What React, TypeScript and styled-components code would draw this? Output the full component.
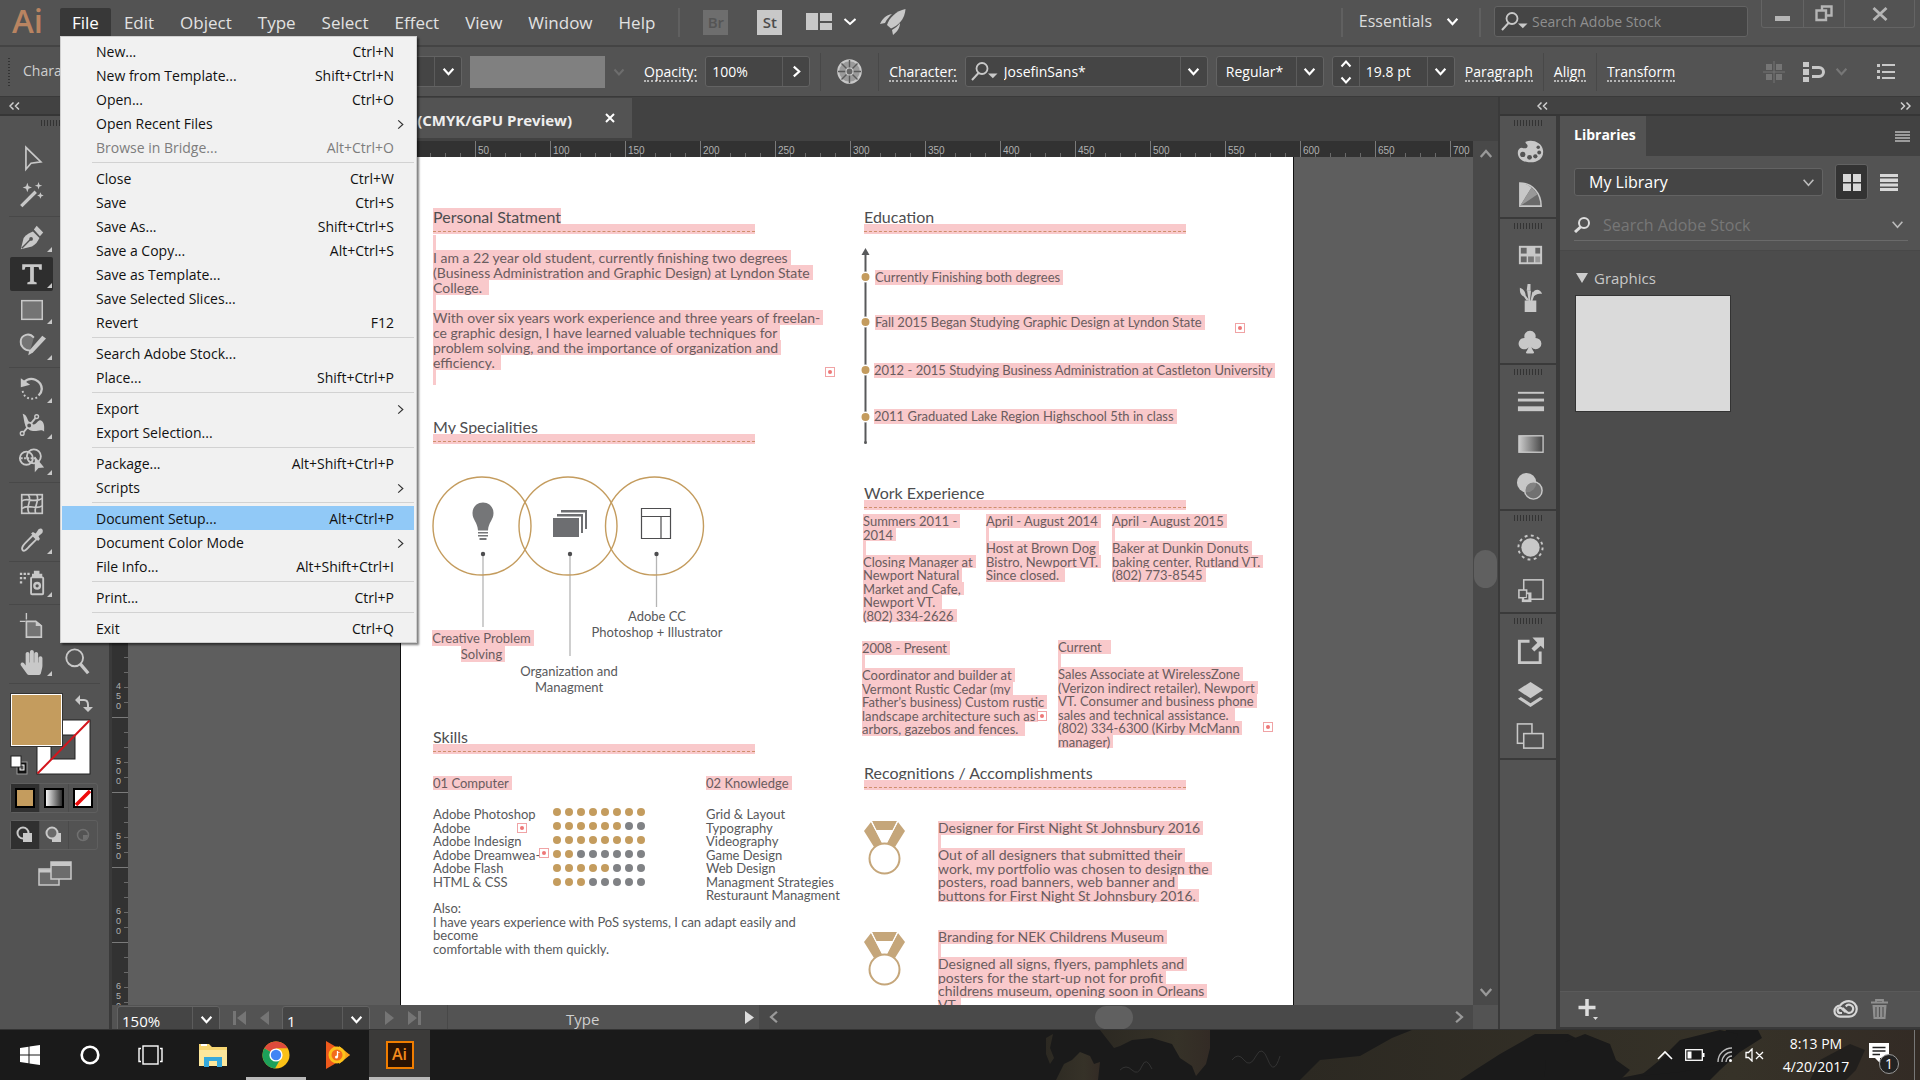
import React from 'react';
import styled, { createGlobalStyle, css } from 'styled-components';
import { BsSuitClubFill } from 'react-icons/bs';
import { FaHandPaper } from 'react-icons/fa';

const c = {
  panel: '#535353',
  field: '#454545',
  dark: '#424242',
  edge: '#3a3a3a',
  canvas: '#5e5e5e',
  icon: '#c8c8c8',
  gold: '#c49c5e',
  pink: '#f9c9cb',
};

const Global = createGlobalStyle`
  * { box-sizing: border-box; }
  html, body { margin: 0; background: ${c.panel}; }
  button, input, select { font: inherit; color: inherit; margin: 0; padding: 0; border: 0; background: none; border-radius: 0; outline: none; }
  svg { display: block; flex: none; }
`;

const Screen = styled.div`
  display: flex; flex-direction: column; height: 100vh; overflow: hidden;
  font-family: "Open Sans", "Noto Sans", sans-serif; font-size: 14px; color: #e6e6e6; background: ${c.panel};
`;

/* ---------- shared bits ---------- */
const Chevron = ({ dir = 'down', w = 12, color = '#fff', sw = 2 }: { dir?: 'down' | 'up' | 'left' | 'right'; w?: number; color?: string; sw?: number }) => {
  const rot = { down: 0, up: 180, left: 90, right: -90 }[dir];
  return (
    <svg width={w} height={w} viewBox="0 0 12 12" aria-hidden="true">
      <path d="M1.5 3.5L6 8.5L10.5 3.5" transform={`rotate(${rot} 6 6)`} fill="none" stroke={color} strokeWidth={sw} />
    </svg>
  );
};

const SearchGlyph = () => (
  <svg width="27" height="20" viewBox="0 0 27 20" aria-hidden="true">
    <circle cx="11" cy="6.500" r="5.500" fill="none" stroke="#c8c8c8" strokeWidth="1.800" />
    <path d="M7.500 11L1 18" stroke="#c8c8c8" strokeWidth="2" />
    <path d="M17 11.500h9.500l-4.700 4.800z" fill="#c8c8c8" />
  </svg>
);

const Grip = styled.div<{ $gap?: number }>`
  width: 28px; height: 6px; flex: none; margin: 4px auto ${(p) => p.$gap ?? 0}px;
  background: repeating-linear-gradient(90deg, #333 0 1px, transparent 1px 3px);
`;

/* ---------- menu bar ---------- */
const MenuBar = styled.header`
  display: flex; align-items: center; height: 45px; flex: none; position: relative; z-index: 5;
`;
const AppMark = styled.div`
  width: 60px; padding: 0 0 4px 12px; font-size: 33px; font-weight: 600; line-height: 40px; color: #b98461;
`;
const Menus = styled.nav`display: flex; height: 100%; padding-top: 8px; align-items: flex-start;`;
const MenuButton = styled.button<{ $open?: boolean }>`
  height: 28px; padding: 0 13px; font-size: 17px; line-height: 30px; color: #e2e2e2;
  ${(p) => p.$open && css`background: #383838; padding: 0 12px; border-radius: 2px 2px 0 0; color: #fff;`}
`;
const VRule = styled.span<{ $m?: string; $h?: number; $dark?: boolean }>`
  width: ${(p) => (p.$dark ? 1 : 2)}px; height: ${(p) => p.$h ?? 29}px; flex: none; margin: ${(p) => p.$m ?? '0'};
  background: ${(p) => (p.$dark ? '#484848' : '#606060')};
`;
const BarIcons = styled.div`display: flex; align-items: center; height: 45px;`;
const AppChip = styled.button<{ $on?: boolean }>`
  width: 25px; height: 25px; margin-right: ${(p) => (p.$on ? 24 : 29)}px; font-size: 15px; line-height: 25px; font-weight: 600;
  background: ${(p) => (p.$on ? '#c8c8c8' : '#6e6e6e')}; color: ${(p) => (p.$on ? '#4c4c4c' : '#555')};
`;
const IconButton = styled.button<{ $w?: number; $mr?: number }>`
  display: flex; align-items: center; justify-content: center; flex: none;
  width: ${(p) => (p.$w ? p.$w + 'px' : 'auto')}; margin-right: ${(p) => p.$mr ?? 0}px;
`;
const Push = styled.span`flex: 1;`;
const Workspace = styled.button`
  display: flex; align-items: center; gap: 14px; font-size: 16px; padding: 0 20px 3px 16px; color: #dcdcdc;
`;
const StockSearch = styled.label`
  display: flex; align-items: center; width: 254px; height: 31px; margin: 0 13px 2px; padding-left: 6px; gap: 4px;
  background: ${c.field}; border: 1px solid #636363; border-radius: 3px;
  input { flex: 1; min-width: 0; }
  input::placeholder { color: #8f8f8f; opacity: 1; }
`;
const WindowButtons = styled.div`
  display: flex; align-self: flex-start; height: 28px; margin-right: 5px; border: 1px solid #646464; border-top: 0; border-radius: 0 0 3px 3px;
`;
const WindowButton = styled.button<{ $w: number }>`
  width: ${(p) => p.$w}px; display: flex; align-items: center; justify-content: center;
  & + & { border-left: 1px solid #646464; }
`;

/* ---------- open menu ---------- */
const MenuPanel = styled.div`
  position: absolute; left: 60px; top: 36px; width: 357px; padding: 2px 2px 2px 1px; z-index: 10;
  background: #f1f1f1; border: 1px solid #cfcfcf; box-shadow: 2px 2px 2px rgba(0, 0, 0, 0.5); color: #111;
`;
const MenuItem = styled.button<{ $hot?: boolean; $off?: boolean }>`
  display: flex; align-items: center; justify-content: space-between; width: 100%; height: 24px;
  padding: 2px 20px 0 34px; font-size: 14px; line-height: 22px; white-space: nowrap;
  color: ${(p) => (p.$off ? '#7d7d7d' : '#111')};
  background: ${(p) => (p.$hot ? '#91c9f7' : 'transparent')};
`;
const SubArrow = styled.span`margin-right: -12px;`;
const MenuRule = styled.hr`height: 1px; margin: 3px 0 3px 30px; border: 0; background: #d2d2d2;`;

type Entry = [string, string?, string?];
const fileMenu: Entry[][] = [
  [['New...', 'Ctrl+N'], ['New from Template...', 'Shift+Ctrl+N'], ['Open...', 'Ctrl+O'], ['Open Recent Files', '>'], ['Browse in Bridge...', 'Alt+Ctrl+O', 'off']],
  [['Close', 'Ctrl+W'], ['Save', 'Ctrl+S'], ['Save As...', 'Shift+Ctrl+S'], ['Save a Copy...', 'Alt+Ctrl+S'], ['Save as Template...'], ['Save Selected Slices...'], ['Revert', 'F12']],
  [['Search Adobe Stock...'], ['Place...', 'Shift+Ctrl+P']],
  [['Export', '>'], ['Export Selection...']],
  [['Package...', 'Alt+Shift+Ctrl+P'], ['Scripts', '>']],
  [['Document Setup...', 'Alt+Ctrl+P', 'hot'], ['Document Color Mode', '>'], ['File Info...', 'Alt+Shift+Ctrl+I']],
  [['Print...', 'Ctrl+P']],
  [['Exit', 'Ctrl+Q']],
];

const FileMenu = () => (
  <MenuPanel role="menu" aria-label="File">
    {fileMenu.map((group, g) => (
      <React.Fragment key={g}>
        {g > 0 && <MenuRule />}
        {group.map(([name, key, state]) => (
          <MenuItem key={name} role="menuitem" $hot={state === 'hot'} $off={state === 'off'}>
            <span>{name}</span>
            {key === '>' ? <SubArrow><Chevron dir="right" w={11} color="#333" sw={1.3} /></SubArrow> : key && <span>{key}</span>}
          </MenuItem>
        ))}
      </React.Fragment>
    ))}
  </MenuPanel>
);

/* ---------- control bar ---------- */
const ControlBar = styled.div`
  display: flex; align-items: center; height: 52px; flex: none; border-top: 2px solid #444; border-bottom: 1px solid ${c.edge};
  color: #f0f0f0;
`;
const DotGrip = styled.span`width: 2px; height: 28px; margin: 0 13px 0 8px; background: repeating-linear-gradient(#333 0 1px, transparent 1px 3px);`;
const Combo = styled.div<{ $w: number; $ml?: number; $pad?: number }>`
  display: flex; align-items: stretch; flex: none; width: ${(p) => p.$w}px; height: 31px; margin-left: ${(p) => p.$ml ?? 8}px;
  background: ${c.field}; border: 1px solid #636363; border-radius: 3px;
  input { flex: 1; min-width: 0; padding-left: ${(p) => p.$pad ?? 6}px; color: #fff; }
  > svg { align-self: center; margin-left: 5px; }
`;
const ComboArrow = styled.button<{ $left?: boolean }>`
  width: 27px; display: flex; flex-direction: column; align-items: center; justify-content: center; gap: 4px;
  ${(p) => (p.$left ? 'border-right' : 'border-left')}: 1px solid #5c5c5c;
`;
const StylePreview = styled.span`width: 135px; height: 32px; margin: 0 8px; background: #808080; flex: none;`;
const PanelLink = styled.a<{ $ml: number }>`
  margin-left: ${(p) => p.$ml}px; color: #fff; text-decoration: none; border-bottom: 2px dotted #b5b5b5; line-height: 17px; padding-top: 2px; flex: none;
`;
const Legend = styled.span`width: 292px; flex: none; color: #cfcfcf; padding-bottom: 2px;`;

/* ---------- main area ---------- */
const Main = styled.main`display: flex; flex: 1; min-height: 0;`;
const Strip = styled.div<{ $inset?: number }>`
  display: flex; align-items: center; justify-content: space-between; height: 19px; flex: none; padding: 0 9px 0 ${(p) => p.$inset ?? 9}px;
  background: ${c.dark}; border-bottom: 2px solid #363636;
`;
const Collapse = ({ right = false }: { right?: boolean }) => (
  <IconButton aria-label="Collapse panels">
    <svg width="11" height="8" viewBox="0 0 11 8"><path d={right ? 'M1 .5L4.500 4L1 7.500M6.500 .5L10 4L6.500 7.500' : 'M4.500 .5L1 4L4.500 7.500M10 .5L6.500 4L10 7.500'} fill="none" stroke="#cfcfcf" strokeWidth="1.500" /></svg>
  </IconButton>
);

const ToolColumn = styled.aside`width: 112px; flex: none; display: flex; flex-direction: column; border-right: 3px solid ${c.edge};`;
const ToolGroup = styled.div`
  display: grid; grid-template-columns: 45px 45px; flex: none; margin: 0 9px 3px; padding-bottom: 3px; border-bottom: 1px solid #484848;
`;
const Tool = styled.button<{ $on?: boolean; $second?: boolean }>`
  height: 36px; display: flex; align-items: center; justify-content: center; position: relative; border-radius: 3px;
  grid-column-start: ${(p) => (p.$second ? 2 : 1)};
  background: ${(p) => (p.$on ? '#2e2e2e' : 'transparent')}; background-clip: content-box; padding: ${(p) => (p.$on ? '1px' : 0)};
`;
const Corner = styled.span`
  position: absolute; right: 2px; bottom: 4px; border-left: 5px solid transparent; border-bottom: 5px solid #c8c8c8;
`;
const S = ({ children, s = 30 }: { children: React.ReactNode; s?: number }) => (
  <svg width={s} height={s} viewBox="0 0 30 30" fill={c.icon} stroke={c.icon} strokeWidth="0" aria-hidden="true">{children}</svg>
);

const toolGroups: { name: string; more?: boolean; on?: boolean; second?: boolean; icon: React.ReactNode }[][] = [
  [
    { name: 'Selection', icon: <path d="M8.500 2.500V26L14 19.500L24.500 18z" fill="none" strokeWidth="1.800" /> },
    { name: 'Magic Wand', icon: <g><path d="M3.500 27L19 11.500" strokeWidth="3.500" /><path d="M10 2l1.300 3.500L15 7l-3.700 1.300L10 12L8.700 8.300L5 7l3.700-1.500zM22 1l1 3 3 1-3 1-1 3-1-3-3-1 3-1zM24 12l1 2.500 2.500 1-2.500 1-1 2.500-1-2.500-2.500-1 2.500-1z" /></g> },
  ],
  [
    { name: 'Pen', more: true, icon: <g><path d="M3 27L6 15C9 11 13 9 16 8L23 15C21 19 19 22 15 24z" /><path d="M17 6l3-4 7 7-3.500 4z" /><path d="M4 26L13 17" stroke={c.panel} strokeWidth="1.500" /><circle cx="14" cy="16" r="2" fill={c.panel} /></g> },
    { name: 'Type', more: true, on: true, icon: <path d="M4.500 4.500H25.500V10.500H23L22 7.500H17V23L20 24V26H10V24L13 23V7.500H8L7 10.500H4.500z" /> },
    { name: 'Rectangle', more: true, icon: <rect x="4" y="5" width="22" height="20" fill="#747474" strokeWidth="1.600" /> },
    { name: 'Shaper', more: true, icon: <g><path d="M13 20C7 20 2 15 3 9C4 3 12 0 17 6" fill="#747474" strokeWidth="2" /><path d="M11 25L12 20L26 4L30 7L16 22z" /></g> },
  ],
  [
    { name: 'Rotate', more: true, icon: <g><path d="M6 8C14 0 25 6 25.500 15C25.500 18 24 20 22 22" fill="none" strokeWidth="2.500" /><path d="M3 3.500V13L13 10.500z" /><path d="M5 17C6 25 15 28 22 23" fill="none" strokeWidth="2" strokeDasharray="2 2.500" /></g> },
    { name: 'Width', more: true, icon: <g><path d="M5 3C11 4 9 12 15 14C20 16 21 9 24 10C29 12 28 18 28 22C24 18 19 24 12 20C6 17 7 9 5 3z" /><path d="M4 25L20 6" strokeWidth="2" /><circle cx="4.500" cy="24" r="2" fill={c.panel} strokeWidth="1.500" /><circle cx="20" cy="6" r="2" fill={c.panel} strokeWidth="1.500" /><circle cx="12" cy="15.500" r="3" fill={c.panel} strokeWidth="1.800" /></g> },
    { name: 'Shape Builder', more: true, icon: <g><circle cx="17" cy="10" r="7.500" fill="none" strokeWidth="2" /><circle cx="9" cy="12" r="7" fill="none" strokeWidth="2" /><path d="M3 12H20" strokeWidth="2" strokeDasharray="2 1.500" /><path d="M18 10V27L22 22.500L28 22z" /></g> },
  ],
  [
    { name: 'Mesh', icon: <g fill="none" strokeWidth="1.800"><rect x="4" y="5" width="22" height="20" /><path d="M4 12C10 7 17 15 26 9M4 20C12 14 18 22 26 17M11 5C16 12 7 18 12 25M20 5C24 12 16 18 19 25" /></g> },
    { name: 'Eyedropper', more: true, icon: <g><path d="M5 26C3 24 6 20 8 18L16 10L20 14L12 22C10 24 7 28 5 26z" fill="none" strokeWidth="2" /><path d="M14 8L16 6.500L19 8L22 3.500C25 1 28 4 26 7.500L22 11L23.500 14L21.500 16z" /></g> },
  ],
  [
    { name: 'Symbol Sprayer', more: true, icon: <g><path d="M2 4h2.500v2.500H2zM6 4h2.500v2.500H6zM10 4h2.500v2.500H10zM2 8.500h2.500V11H2zM6 8.500h2.500V11H6zM2 13h2.500v2.500H2z" /><path d="M17 2h6v3h3v4h-11V5h2z" /><rect x="14" y="9" width="13" height="18" rx="1" fill="none" strokeWidth="2" /><circle cx="20.500" cy="18" r="3" fill="none" strokeWidth="2.500" /></g> },
  ],
  [
    { name: 'Artboard', icon: <g><path d="M2 10H8M9 1V8" strokeWidth="1.500" /><path d="M9 10H19L25 15V27H9z" fill="#747474" strokeWidth="1.800" /><path d="M19 9V15H26z" /></g> },
    { name: 'Hand', more: true, icon: <g /> },
    { name: 'Zoom', second: true, icon: <g><circle cx="12.500" cy="10.500" r="9" fill="none" strokeWidth="2" /><path d="M18.500 17L27 27" strokeWidth="3.500" /></g> },
  ],
];

const ToolOptions = styled.div`display: flex; flex-direction: column; padding: 3px 10px 0;`;
const TriRow = styled.div`display: flex; height: 30px; margin-top: 7px; width: 88px; border: 1px solid #5f5f5f; border-radius: 3px;`;
const TriButton = styled.button<{ $on?: boolean }>`
  flex: 1; display: flex; align-items: center; justify-content: center; background: ${(p) => (p.$on ? '#303030' : 'transparent')};
  & + & { border-left: 1px solid #4a4a4a; }
`;
const ScreenMode = styled.button`align-self: flex-start; margin: 11px 0 0 28px;`;

/* ---------- document window ---------- */
const DocWindow = styled.section`flex: 1; min-width: 0; display: flex; flex-direction: column; border-right: 2px solid ${c.edge}; background: ${c.dark};`;
const TabRow = styled.div`display: flex; height: 44px; flex: none; padding: 1px 0 3px;`;
const DocTab = styled.div`
  display: flex; align-items: center; justify-content: flex-end; gap: 33px; width: 520px; padding-right: 17px; background: ${c.panel};
  font-size: 15px; font-weight: 700; color: #eee; white-space: nowrap; padding-top: 3px;
`;
const DocBody = styled.div`flex: 1; min-height: 0; display: grid; grid-template-columns: 16px minmax(0, 1fr) 25px; grid-template-rows: 16px minmax(0, 1fr) 24px;`;
const RulerX = styled.div`
  grid-column: 1 / 3; display: flex; overflow: hidden; background: #323232; padding-left: 63px; font-size: 10px; color: #b0b0b0;
  font-family: "Liberation Sans", sans-serif;
`;
const MarkX = styled.span`
  width: 75px; flex: none; padding: 4px 0 0 2px; border-left: 1px solid #7a7a7a; line-height: 12px;
  background: repeating-linear-gradient(90deg, transparent 0 14px, #6a6a6a 14px 15px) 0 100% / 100% 4px no-repeat;
`;
const RulerY = styled.div`overflow: hidden; background: #323232; padding-top: 36px; font-size: 9px; color: #b0b0b0; font-family: "Liberation Sans", sans-serif;`;
const MarkY = styled.div`
  display: flex; align-items: flex-end; height: 75px; padding: 0 0 6px 4px; line-height: 10px; border-bottom: 1px solid #7a7a7a;
  background: repeating-linear-gradient(transparent 0 14px, #6a6a6a 14px 15px) 100% 0 / 4px 100% no-repeat;
  span { width: 6px; word-break: break-all; }
`;
const Canvas = styled.div`overflow: hidden; background: ${c.canvas}; padding-left: 272px;`;
const ScrollV = styled.div`
  grid-row: 1 / 3; grid-column: 3; display: flex; flex-direction: column; align-items: center; justify-content: space-between; padding: 6px 0 6px; background: #494949; position: relative;
`;
const Thumb = styled.span<{ $h?: boolean }>`
  position: absolute; background: #606060; border-radius: 12px;
  ${(p) => (p.$h ? css`left: 47%; top: 1px; width: 38px; height: 23px;` : css`top: 409px; left: 1px; width: 23px; height: 38px;`)}
`;
const StatusBar = styled.div`grid-column: 1 / 4; display: flex; align-items: stretch; background: ${c.panel}; color: #e8e8e8; font-size: 15px; overflow: hidden;`;
const StatusCombo = styled(Combo)`height: 26px; margin-top: 1px; border-radius: 3px 3px 0 0; input { padding: 4px 0 0 4px; }`;
const NavButtons = styled.span<{ $w: number }>`display: flex; align-items: center; justify-content: center; gap: 14px; width: ${(p) => p.$w}px; padding-top: 2px;`;
const StatusText = styled.span`width: 292px; padding: 3px 0 0 118px; margin-left: 12px; line-height: 22px; border-left: 1px solid #484848; color: #cfcfcf;`;
const ScrollH = styled.div`flex: 1; display: flex; align-items: center; justify-content: space-between; padding: 0 7px 0 8px; background: #494949; position: relative; margin-right: 25px; min-width: 0;`;

/* ---------- artboard ---------- */
const Artboard = styled.article`
  position: relative; width: 894px; height: 1160px; background: #fff; border: 1px solid #111; border-top: 0;
  font-family: Lato, "Open Sans", sans-serif; font-size: 13px; line-height: 15px; color: #58595b;
`;
type At = { $x: number; $y: number };
const Frame = styled.div<At & { $size?: number; $pitch?: 'body' | 'label'; $center?: boolean }>`
  position: absolute; left: ${(p) => p.$x}px; top: ${(p) => p.$y}px; white-space: pre; font-size: ${(p) => p.$size ?? 13}px;
  ${(p) => p.$center && css`width: 160px; text-align: center;`}
  > div { height: ${(p) => (p.$pitch === 'body' ? 15 : p.$pitch === 'label' ? 16 : 14)}px; line-height: ${(p) => (p.$pitch === 'body' ? 15 : p.$pitch === 'label' ? 16 : 14)}px; }
  ${(p) => !p.$pitch && css`> div:nth-child(even) { height: 13px; }`}
`;
const Mark = styled.span<{ $blank?: boolean }>`
  display: inline-block; height: 100%; min-width: 3px; padding-right: ${(p) => (p.$blank ? 0 : 3)}px; background: ${c.pink}; color: #6a5c5e; vertical-align: top;
`;
const HeadingBox = styled.div<At>`position: absolute; left: ${(p) => p.$x}px; top: ${(p) => p.$y}px; width: 322px;`;
const Title = styled.h2<{ $sel?: boolean }>`
  width: fit-content; margin: 0; height: 16px; font-size: 16px; line-height: 18px; font-weight: 400; color: #4d4d4f; white-space: nowrap;
  background: ${(p) => (p.$sel ? c.pink : 'none')};
`;
const Band = styled.div`
  position: relative; height: 10px; background: ${c.pink};
  &::after { content: ""; display: block; height: 7px; border-bottom: 1px dashed #cf8f6c; }
`;
const Overflow = styled.span<At>`
  position: absolute; left: ${(p) => p.$x}px; top: ${(p) => p.$y}px; width: 10px; height: 10px; border: 1px solid #f0a3a5;
  &::after { content: ""; display: block; width: 4px; height: 4px; margin: 2px; border-radius: 2px; background: #e77; }
`;
const Art = styled.svg<At>`position: absolute; left: ${(p) => p.$x}px; top: ${(p) => p.$y}px;`;
const DotGrid = styled.div<At>`position: absolute; left: ${(p) => p.$x}px; top: ${(p) => p.$y}px; display: grid; grid-template-columns: repeat(8, 8px); gap: 6px 4px;`;
const Dot = styled.i<{ $on: boolean }>`width: 8px; height: 8px; border-radius: 4px; background: ${(p) => (p.$on ? c.gold : '#808285')};`;

const Heading = ({ x, y, children, sel }: { x: number; y: number; children: string; sel?: boolean }) => (
  <HeadingBox $x={x} $y={y}><Title $sel={sel}>{children}</Title><Band /></HeadingBox>
);
const Copy = ({ x, y, lines, plain, size, pitch, center }: { x: number; y: number; lines: string[]; plain?: boolean; size?: number; pitch?: 'body' | 'label'; center?: boolean }) => (
  <Frame $x={x} $y={y} $size={size} $pitch={pitch} $center={center}>
    {lines.map((l, i) => <div key={i}>{plain ? l : <Mark $blank={!l}>{l}</Mark>}</div>)}
  </Frame>
);
const Medal = ({ x, y }: { x: number; y: number }) => (
  <Art $x={x} $y={y} width="42" height="54" viewBox="0 0 42 54">
    <path d="M8 0H33L29 9H12z" fill="#c5a67a" />
    <path d="M7 1L0 10L10 26L19 23z" fill="#c5a67a" /><path d="M34 1L41 10L31 26L22 23z" fill="#c5a67a" />
    <path d="M7.500 .5L19 23M33.500 .5L22 23" stroke="#fff" strokeWidth="1.200" />
    <circle cx="20.500" cy="37.500" r="15" fill="#fff" stroke="#c5a67a" strokeWidth="2" />
  </Art>
);

const Resume = () => (
  <Artboard>
    <Heading x={32} y={51} sel>Personal Statment</Heading>
    <Copy x={32} y={78} pitch="body" size={14} lines={['', 'I am a 22 year old student, currently finishing two degrees', '(Business Administration and Graphic Design) at Lyndon State', 'College. ', '', 'With over six years work experience and three years of freelan-', 'ce graphic design, I have learned valuable techniques for', 'problem solving, and the importance of organization and', 'efficiency. ', '']} />
    <Overflow $x={424} $y={210} />
    <Heading x={32} y={261}>My Specialities</Heading>
    <Art $x={30} $y={316} width="280" height="186" viewBox="0 0 280 186">
      <g stroke="#b5b5b5" strokeWidth="1.300"><path d="M52 82V154M139 82V183M225.500 82V134" /></g>
      <g fill="none" stroke={c.gold} strokeWidth="1.400"><circle cx="51" cy="53" r="49" /><circle cx="137" cy="53" r="49" /><circle cx="223.500" cy="53" r="49" /></g>
      <g fill="#4d4d4f"><circle cx="52" cy="81" r="2.200" /><circle cx="139" cy="81" r="2.200" /><circle cx="225.500" cy="81" r="2.200" /></g>
      <path d="M52 29.500c-6 0-10.500 4.500-10.500 10.500 0 7 5 9 5.500 17.500h10c.5-8.500 5.500-10.500 5.500-17.500 0-6-4.500-10.500-10.500-10.500zM47 59h10v1.500H47zM47 62h10v1.500H47zM48.500 65h7v2h-7z" fill="#757678" />
      <g fill="#6d6e71"><path d="M130 37h26v19h-2V39.500h-24zM126 41h26v19h-2V43.500h-24z" /><rect x="122" y="45" width="26" height="19" /></g>
      <path d="M210.500 35.500h29v30h-29zM210.500 43.500h29M230 43.500v22" fill="none" stroke="#4d4d4f" strokeWidth="1.200" />
    </Art>
    <Copy x={2} y={473} pitch="label" center lines={['Creative Problem', 'Solving']} />
    <Copy x={88} y={506} pitch="label" center plain lines={['Organization and', 'Managment']} />
    <Copy x={176} y={451} pitch="label" center plain lines={['Adobe CC', 'Photoshop + Illustrator']} />

    <Heading x={32} y={571}>Skills</Heading>
    <Copy x={32} y={619} lines={['01 Computer']} />
    <Copy x={305} y={619} lines={['02 Knowledge']} />
    <Copy x={32} y={650} plain lines={['Adobe Photoshop', 'Adobe', 'Adobe Indesign', 'Adobe Dreamwea-', 'Adobe Flash', 'HTML & CSS']} />
    <Overflow $x={116} $y={666} />
    <Overflow $x={138} $y={691} />
    <DotGrid $x={152} $y={651}>
      {[8, 6, 8, 2, 5, 3].flatMap((n, r) => Array.from({ length: 8 }, (_, i) => <Dot key={`${r}-${i}`} $on={i < n} />))}
    </DotGrid>
    <Copy x={305} y={650} plain lines={['Grid & Layout', 'Typography', 'Videography', 'Game Design', 'Web Design', 'Managment Strategies', 'Resturaunt Managment']} />
    <Copy x={32} y={744} plain lines={['Also:', 'I have years experience with PoS systems, I can adapt easily and', 'become', 'comfortable with them quickly.']} />

    <Heading x={463} y={51}>Education</Heading>
    <Art $x={459} $y={91} width="12" height="198" viewBox="0 0 12 198">
      <path d="M5.500 5V194" stroke="#58595b" strokeWidth="2" /><path d="M5.500 0L9.500 7H1.500z" fill="#58595b" /><circle cx="5.500" cy="194.500" r="1.500" fill="#58595b" />
      {[29, 74, 122, 169].map((y) => <circle key={y} cx="5.500" cy={y} r="4.700" fill={c.gold} stroke="#fff" strokeWidth="1.400" />)}
    </Art>
    <Copy x={474} y={113} pitch="body" lines={['Currently Finishing both degrees']} />
    <Copy x={474} y={158} pitch="body" lines={['Fall 2015 Began Studying Graphic Design at Lyndon State']} />
    <Overflow $x={834} $y={166} />
    <Copy x={473} y={206} pitch="body" lines={['2012 - 2015 Studying Business Administration at Castleton University']} />
    <Copy x={473} y={252} pitch="body" lines={['2011 Graduated Lake Region Highschool 5th in class']} />

    <Heading x={463} y={327}>Work Experience</Heading>
    <Copy x={462} y={357} lines={['Summers 2011 -', '2014', '', 'Closing Manager at', 'Newport Natural', 'Market and Cafe,', 'Newport VT. ', '(802) 334-2626']} />
    <Copy x={585} y={357} lines={['April - August 2014', '', 'Host at Brown Dog', 'Bistro, Newport VT.', 'Since closed. ']} />
    <Copy x={711} y={357} lines={['April - August 2015', '', 'Baker at Dunkin Donuts', 'baking center, Rutland VT.', '(802) 773-8545']} />
    <Copy x={461} y={484} lines={['2008 - Present', '', 'Coordinator and builder at', 'Vermont Rustic Cedar (my', 'Father’s business) Custom rustic', 'landscape architecture such as', 'arbors, gazebos and fences. ']} />
    <Overflow $x={636} $y={554} />
    <Copy x={657} y={483} lines={['Current  ', '', 'Sales Associate at WirelessZone', '(Verizon indirect retailer), Newport', 'VT. Consumer and business phone', 'sales and technical assistance. ', '(802) 334-6300 (Kirby McMann', 'manager)']} />
    <Overflow $x={862} $y={565} />

    <Heading x={463} y={607}>Recognitions / Accomplishments</Heading>
    <Medal x={463} y={664} />
    <Copy x={537} y={664} size={14} lines={['Designer for First Night St Johnsbury 2016', '', 'Out of all designers that submitted their', 'work, my portfolio was chosen to design the', 'posters, road banners, web banner and', 'buttons for First Night St Johnsbury 2016.']} />
    <Medal x={463} y={775} />
    <Copy x={537} y={773} size={14} lines={['Branding for NEK Childrens Museum', '', 'Designed all signs, flyers, pamphlets and', 'posters for the start-up not for profit', 'childrens museum, opening soon in Orleans', 'VT.']} />
  </Artboard>
);

/* ---------- right side ---------- */
const RightSide = styled.aside`width: 420px; flex: none; display: flex; flex-direction: column;`;
const RightBody = styled.div`flex: 1; min-height: 0; display: flex;`;
const Dock = styled.div`width: 60px; flex: none; border-right: 4px solid ${c.edge};`;
const DockGroup = styled.div`border-bottom: 2px solid ${c.edge};`;
const DockButton = styled.button`display: flex; width: 100%; height: 43px; padding-left: 4px; align-items: center; justify-content: center;`;

const dock: [string, React.ReactNode][][] = [
  [
    ['Color', <g><path d="M10 4C16 1 27 4 28 13C29 22 21 26 13 25C6 25 1 20 2 14C2 12 4 10 6 10C9 11 12 11 12 8C12 6 9 6 10 4z" /><g fill={c.panel}><circle cx="7" cy="17" r="2.700" /><circle cx="14" cy="20" r="2.500" /><circle cx="20" cy="19" r="2.200" /><circle cx="24" cy="15" r="2" /><circle cx="23" cy="9.500" r="1.800" /></g></g>],
    ['Color Guide', <g><path d="M4 2C17 2 26 13 26 26H4z" fill="#6a6a6a" strokeWidth="1.600" /><path d="M4 2C9 2 13 4 16 7L4 26z" /><path d="M16 7C19 9 21 12 22 14L4 26z" fill="#989898" /></g>],
  ],
  [
    ['Swatches', <g><rect x="3" y="5" width="24" height="19" /><g fill="#666"><rect x="5" y="7" width="6" height="6" /><rect x="20" y="7" width="5" height="6" /><rect x="5" y="16" width="6" height="6" /><rect x="12.500" y="16" width="6" height="6" fill="#777" /><rect x="20" y="16" width="5" height="6" fill="#999" /></g></g>],
    ['Brushes', <g><path d="M9 17h12v12H9zM13 17L11.500 7h4l-1 10zM15 17l2-9 3 1-3 8z" /><path d="M12 0h3v7h-4zM4 4c3 1 6 4 6 8l4 5h-3l-3-4C4 11 4 8 4 4zM18 8c2-3 7-3 9 2-3 0-6 0-9 3z" /></g>],
    ['Symbols', null],
  ],
  [
    ['Stroke', <g><rect x="2" y="5" width="27" height="2" /><rect x="2" y="12" width="27" height="3" /><rect x="2" y="20" width="27" height="5" /></g>],
    ['Gradient', <g><defs><linearGradient id="dockGrad"><stop offset="0" stopColor="#ccc" /><stop offset="1" stopColor="#444" /></linearGradient></defs><rect x="3" y="6" width="25" height="17" fill="url(#dockGrad)" strokeWidth="1.400" /></g>],
    ['Transparency', <g><circle cx="11" cy="10" r="10" /><circle cx="18" cy="18" r="9" fill="#777" fillOpacity="0.850" strokeWidth="1.500" /></g>],
  ],
  [
    ['Appearance', <g><circle cx="15" cy="15" r="9.500" /><circle cx="15" cy="15" r="12.500" fill="none" strokeWidth="2" strokeDasharray="3 3.540" /></g>],
    ['Graphic Styles', <g><rect x="8" y="4" width="20" height="20" fill="none" strokeWidth="1.600" /><rect x="6" y="17" width="10" height="10" /><rect x="3" y="14.500" width="8" height="8" fill={c.panel} strokeWidth="1.600" /><path d="M12 19v4.500H8.500" fill="none" stroke={c.panel} strokeWidth="1.500" /></g>],
  ],
  [
    ['Asset Export', <g><path d="M14 5.500H3.500V27.500H25V16" fill="none" strokeWidth="3" /><path d="M17 1.500H29V13.500L25.500 10L19 16L16 13L22 7z" /></g>],
    ['Layers', <g><path d="M15 3L28 11.500L15 20L2 11.500z" /><path d="M2 20.500L5 18.500L15 25L25 18.500L28 20.500L15 29z" /></g>],
    ['Artboards', <g fill={c.panel} strokeWidth="1.600"><rect x="1.500" y="2" width="15" height="20" /><rect x="8" y="12" width="20" height="15" /></g>],
  ],
];

const LibPanel = styled.section`flex: 1; min-width: 0; display: flex; flex-direction: column; background: #4c4c4c;`;
const LibTabs = styled.div`display: flex; justify-content: space-between; align-items: stretch; height: 40px; background: ${c.dark}; padding-right: 10px;`;
const LibTab = styled.h2`margin: 0; width: 86px; padding: 0 14px; background: ${c.panel}; font-size: 14px; line-height: 38px; font-weight: 700; color: #fff;`;
const LibHead = styled.div`background: ${c.panel}; padding: 8px 12px 9px 14px; height: 95px; border-bottom: 1px solid #484848;`;
const LibRow = styled.div`display: flex; align-items: center; height: 36px; padding-right: 4px;`;
const SelectWrap = styled.label`
  position: relative; display: flex; align-items: center; flex: 1; height: 28px; border: 1px solid #636363; border-radius: 3px; background: ${c.field};
  select { appearance: none; width: 100%; height: 26px; padding-left: 14px; font-size: 16px; color: #fff; }
  svg { position: absolute; right: 7px; pointer-events: none; }
`;
const ViewButton = styled.button<{ $on?: boolean }>`
  width: 33px; height: 36px; margin-left: 12px; display: flex; align-items: center; justify-content: center; border-radius: 3px;
  background: ${(p) => (p.$on ? '#333' : 'transparent')}; border: 1px solid ${(p) => (p.$on ? '#626262' : 'transparent')};
  & + & { margin-left: 5px; width: 31px; }
`;
const LibSearch = styled.label`
  display: flex; align-items: center; gap: 13px; height: 32px; margin-top: 9px; border-bottom: 1px solid #6a6a6a; padding: 0 4px 0 0;
  input { flex: 1; min-width: 0; font-size: 16px; }
  input::placeholder { color: #777; opacity: 1; }
`;
const LibBody = styled.div`flex: 1; padding: 16px 14px;`;
const SectionTitle = styled.button`display: flex; align-items: center; gap: 6px; height: 22px; font-size: 15px; color: #c8c8c8; margin: 0 0 6px 2px;`;
const Asset = styled.div`width: 156px; height: 117px; background: #dadada; border: 1px solid #333; margin-left: 1px;`;
const LibFoot = styled.footer`display: flex; align-items: center; gap: 13px; height: 38px; padding: 0 32px 2px 18px; background: ${c.panel}; border-top: 1px solid #5a5a5a; border-bottom: 2px solid ${c.edge};`;

/* ---------- taskbar ---------- */
const Taskbar = styled.footer`position: relative; display: flex; height: 51px; flex: none; background: #1a1a1a; border-top: 1px solid #333; color: #fff; overflow: hidden;`;
const MapArt = styled.svg`position: absolute; right: 0; top: 0; pointer-events: none;`;
const Task = styled.button<{ $w?: number; $run?: boolean; $active?: boolean }>`
  position: relative; display: flex; align-items: center; justify-content: center; width: ${(p) => p.$w ?? 60}px; flex: none;
  background: ${(p) => (p.$active ? '#3b3a39' : 'transparent')};
  border-bottom: ${(p) => (p.$run || p.$active ? 3 : 0)}px solid #b9b9b9; padding-top: ${(p) => (p.$run || p.$active ? 2 : 0)}px;
`;
const AiTile = styled.span`width: 28px; height: 28px; border: 2px solid #f07d00; background: #2a1203; color: #f58a1c; font-size: 16px; font-weight: 600; line-height: 23px; text-align: center;`;
const Tray = styled.div`position: relative; display: flex; align-items: center; gap: 12px; padding-right: 5px;`;
const Clock = styled.time`width: 80px; text-align: center; line-height: 23px; font-size: 14px;`;
const Notice = styled.button`position: relative; width: 47px; height: 50px; border-right: 1px solid #777; display: flex; align-items: center; padding: 0 0 4px 1px;`;
const Badge = styled.span`position: absolute; left: 11px; top: 24px; width: 20px; height: 20px; border: 1px solid #999; border-radius: 10px; background: #222; font-size: 14px; line-height: 18px; text-align: center;`;

const horizontal = ['150', '100', '50', '0', '50', '100', '150', '200', '250', '300', '350', '400', '450', '500', '550', '600', '650', '700'];
const vertical = ['100', '150', '200', '250', '300', '350', '400', '450', '500', '550', '600', '650'].map((n) => String(Number(n) + 50));

export default function App() {
  return (
    <Screen>
      <Global />
      <MenuBar>
        <AppMark>Ai</AppMark>
        <Menus aria-label="Main menu">
          {['File', 'Edit', 'Object', 'Type', 'Select', 'Effect', 'View', 'Window', 'Help'].map((m) => <MenuButton key={m} $open={m === 'File'}>{m}</MenuButton>)}
        </Menus>
        <BarIcons>
          <VRule $m="0 23px 0 10px" />
          <AppChip>Br</AppChip>
          <AppChip $on>St</AppChip>
          <IconButton $mr={24} aria-label="Arrange documents">
            <svg width="50" height="22" viewBox="0 0 50 22"><g fill={c.icon}><rect x="0" y="1" width="12" height="17" /><rect x="14" y="1" width="12" height="8" /><rect x="14" y="11" width="12" height="7" /></g><path d="M38.500 7L44 12L49.500 7" fill="none" stroke="#fff" strokeWidth="2" /></svg>
          </IconButton>
          <IconButton aria-label="GPU performance">
            <svg width="26" height="28" viewBox="0 0 26 28" fill={c.icon}><path d="M25.500 0C16 2 9 9 7 16L11 19.500C18 17 25 10 25.500 0z" /><path d="M12 5C6 6 2 10 0 15L5 14C7 10 9 8 12 5zM20 14C18 17 15 19 12 21L13 26C17 23 20 19 20 14z" /></svg>
          </IconButton>
        </BarIcons>
        <Push />
        <VRule />
        <Workspace>Essentials <Chevron w={13} /></Workspace>
        <VRule />
        <StockSearch>
          <SearchGlyph />
          <input type="search" placeholder="Search Adobe Stock" aria-label="Search Adobe Stock" />
        </StockSearch>
        <WindowButtons>
          <WindowButton $w={41} aria-label="Minimize"><svg width="15" height="18" viewBox="0 0 15 18"><rect y="11" width="15" height="5" fill="#b5b5b5" /></svg></WindowButton>
          <WindowButton $w={41} aria-label="Restore"><svg width="18" height="17" viewBox="0 0 18 17" fill="none" stroke="#b5b5b5" strokeWidth="2.400"><path d="M7 5V1.500H16.500V10.500H12M1.500 5.500H11V15H1.500z" /></svg></WindowButton>
          <WindowButton $w={70} aria-label="Close"><svg width="16" height="14" viewBox="0 0 16 14"><path d="M1.500 1L14.500 13M14.500 1L1.500 13" stroke="#b5b5b5" strokeWidth="2.800" /></svg></WindowButton>
        </WindowButtons>
        <FileMenu />
      </MenuBar>

      <ControlBar>
        <DotGrip />
        <Legend>Characters</Legend>
        <Combo $w={139}><input aria-label="Stroke style" /><ComboArrow aria-label="Stroke style list"><Chevron w={13} /></ComboArrow></Combo>
        <StylePreview />
        <IconButton $w={12} $mr={19} aria-label="Graphic style"><Chevron w={12} color="#6d6d6d" /></IconButton>
        <PanelLink href="#opacity" $ml={0}>Opacity:</PanelLink>
        <Combo $w={105}><input aria-label="Opacity" defaultValue="100%" /><ComboArrow aria-label="Opacity slider"><Chevron dir="right" w={13} /></ComboArrow></Combo>
        <VRule $dark $h={38} $m="0 16px 0 10px" />
        <IconButton aria-label="Recolor artwork">
          <svg width="25" height="25" viewBox="0 0 25 25"><circle cx="12.500" cy="12.500" r="11.300" fill="#9a9a9a" stroke="#c8c8c8" strokeWidth="2" /><path d="M12.500 1V24M1 12.500H24M4.500 4.500L20.500 20.500M20.500 4.500L4.500 20.500" stroke="#5a5a5a" strokeWidth="1.400" /><circle cx="12.500" cy="12.500" r="3.500" fill="#666" stroke="#c8c8c8" strokeWidth="1.200" /></svg>
        </IconButton>
        <VRule $dark $h={38} $m="0 0 0 16px" />
        <PanelLink href="#character" $ml={10}>Character:</PanelLink>
        <Combo $w={243}><SearchGlyph /><input aria-label="Font family" defaultValue="JosefinSans*" /><ComboArrow aria-label="Font list"><Chevron w={13} /></ComboArrow></Combo>
        <Combo $w={108} $pad={9}><input aria-label="Font style" defaultValue="Regular*" /><ComboArrow aria-label="Style list"><Chevron w={13} /></ComboArrow></Combo>
        <Combo $w={123}>
          <ComboArrow $left aria-label="Step size"><Chevron dir="up" w={12} /><Chevron w={12} /></ComboArrow>
          <input aria-label="Font size" defaultValue="19.8 pt" /><ComboArrow aria-label="Size list"><Chevron w={13} /></ComboArrow>
        </Combo>
        <PanelLink href="#paragraph" $ml={10}>Paragraph</PanelLink>
        <VRule $dark $h={38} $m="0 0 0 10px" />
        <PanelLink href="#align" $ml={10}>Align</PanelLink>
        <VRule $dark $h={38} $m="0 0 0 10px" />
        <PanelLink href="#transform" $ml={10}>Transform</PanelLink>
        <Push />
        <IconButton $mr={18} aria-label="Align to pixel grid"><svg width="22" height="22" viewBox="0 0 22 22" fill="#757575"><path d="M3 3h6v6H3zM13 3h6v6h-6zM3 13h6v6H3zM13 13h6v6h-6zM0 10.500h22v1H0zM10.500 0h1v22h-1z" /></svg></IconButton>
        <IconButton $mr={10} aria-label="Snap"><svg width="22" height="22" viewBox="0 0 22 22" fill={c.icon}><path d="M0 1h6v5H0zM0 8h6v6H0zM0 16h6v5H0z" /><path d="M9 6.500H16A4.500 4.500 0 0 1 16 15.500H9" fill="none" stroke={c.icon} strokeWidth="3" /></svg></IconButton>
        <IconButton $mr={29} aria-label="Snap options"><Chevron w={13} color="#777" /></IconButton>
        <IconButton $mr={25} aria-label="Panel menu"><svg width="18" height="16" viewBox="0 0 18 16" fill={c.icon}><path d="M0 0h3v3H0zM5 0h13v2H5zM0 6h3v3H0zM5 7h13v2H5zM0 12h3v3H0zM5 13h13v2H5z" /></svg></IconButton>
      </ControlBar>

      <Main>
        <ToolColumn aria-label="Tools">
          <Strip><Collapse /></Strip>
          <Grip $gap={15} />
          {toolGroups.map((g, i) => (
            <ToolGroup key={i}>
              {g.map((t) => (
                <Tool key={t.name} $on={t.on} $second={t.second} aria-label={t.name}>
                  {t.name === 'Hand' ? <FaHandPaper size={25} color={c.icon} /> : <S s={28}>{t.icon}</S>}
                  {t.more && <Corner />}
                </Tool>
              ))}
            </ToolGroup>
          ))}
          <ToolOptions>
            <svg width="84" height="86" viewBox="0 -2 84 86" role="img" aria-label="Fill and stroke">
              <rect x="27" y="28" width="53" height="54" fill="#fff" stroke="#222" strokeWidth="1" />
              <rect x="41" y="43" width="24" height="24" fill={c.panel} stroke="#222" />
              <path d="M27.500 81.500L79.500 28.500" stroke="#d3151c" strokeWidth="2" />
              <rect x="0" y="1" width="53" height="54" fill="#333" /><rect x="1" y="2" width="51" height="52" fill="#fff" /><rect x="2" y="3" width="49" height="50" fill={c.gold} />
              <path d="M69 8H74Q78 8 78 13V17" fill="none" stroke={c.icon} strokeWidth="2" /><path d="M70 3V13L65 8zM73 15H83L78 20z" fill={c.icon} />
              <rect x="7" y="70" width="10" height="12" fill="#111" stroke="#999" /><rect x="10" y="73" width="4" height="5" fill={c.panel} stroke="#fff" /><rect x="1" y="64" width="10" height="11" fill="#fff" stroke="#222" />
            </svg>
            <TriRow>
              <TriButton $on aria-label="Color"><svg width="20" height="20"><rect x="1" y="1" width="18" height="18" fill={c.gold} stroke="#000" strokeWidth="2" /></svg></TriButton>
              <TriButton aria-label="Gradient"><svg width="20" height="20"><defs><linearGradient id="toolGrad"><stop offset="0" stopColor="#fff" /><stop offset="1" stopColor="#222" /></linearGradient></defs><rect x="1" y="1" width="18" height="18" fill="url(#toolGrad)" stroke="#000" strokeWidth="2" /></svg></TriButton>
              <TriButton aria-label="None"><svg width="20" height="20"><rect x="1" y="1" width="18" height="18" fill="#fff" stroke="#000" strokeWidth="2" /><path d="M3 17L17 3" stroke="#ee0a0a" strokeWidth="3.500" /></svg></TriButton>
            </TriRow>
            <TriRow>
              <TriButton $on aria-label="Draw normal"><svg width="18" height="18"><circle cx="7" cy="7" r="5.500" fill="none" stroke={c.icon} strokeWidth="2" /><rect x="7" y="7" width="9" height="9" fill={c.icon} /></svg></TriButton>
              <TriButton aria-label="Draw behind"><svg width="18" height="18"><rect x="7" y="7" width="9" height="9" fill={c.icon} /><circle cx="7" cy="7" r="5.500" fill="#6a6a6a" stroke={c.icon} strokeWidth="2" /></svg></TriButton>
              <TriButton aria-label="Draw inside"><svg width="18" height="18"><circle cx="9" cy="9" r="5.500" fill="none" stroke="#707070" strokeWidth="1.500" /><path d="M9 9H14A5 5 0 0 1 9 14z" fill="#707070" /></svg></TriButton>
            </TriRow>
            <ScreenMode aria-label="Change screen mode"><svg width="34" height="26"><rect x="1" y="8" width="20" height="16" fill="#6c6c6c" stroke={c.icon} strokeWidth="1.500" /><path d="M1 10H13" stroke={c.icon} strokeWidth="3" /><rect x="13" y="1" width="20" height="17" fill="#6c6c6c" stroke={c.icon} strokeWidth="1.500" /><path d="M13 3H33" stroke={c.icon} strokeWidth="4" /></svg></ScreenMode>
          </ToolOptions>
        </ToolColumn>

        <DocWindow>
          <TabRow>
            <DocTab><span>resume.ai @ 150% (CMYK/GPU Preview)</span>
              <IconButton aria-label="Close document"><svg width="10" height="14" viewBox="0 0 10 14"><path d="M1 1L9 9M9 1L1 9" stroke="#fff" strokeWidth="2" /></svg></IconButton>
            </DocTab>
          </TabRow>
          <DocBody>
            <RulerX aria-hidden="true">{horizontal.map((n, i) => <MarkX key={i}>{n}</MarkX>)}</RulerX>
            <RulerY aria-hidden="true">{vertical.map((n) => <MarkY key={n}><span>{n}</span></MarkY>)}</RulerY>
            <Canvas><Resume /></Canvas>
            <ScrollV><Chevron dir="up" w={14} color="#999" /><Thumb /><Chevron w={14} color="#999" /></ScrollV>
            <StatusBar>
              <StatusCombo $w={103} $ml={5}><input aria-label="Zoom level" defaultValue="150%" /><ComboArrow aria-label="Zoom list"><Chevron w={13} /></ComboArrow></StatusCombo>
              <NavButtons $w={62}>
                <IconButton aria-label="First artboard"><svg width="13" height="14"><path d="M0 0H3V14H0zM13 0V14L4 7z" fill="#757575" /></svg></IconButton>
                <IconButton aria-label="Previous artboard"><svg width="9" height="14"><path d="M9 0V14L0 7z" fill="#757575" /></svg></IconButton>
              </NavButtons>
              <StatusCombo $w={88} $ml={0}><input aria-label="Artboard" defaultValue="1" /><ComboArrow aria-label="Artboard list"><Chevron w={13} /></ComboArrow></StatusCombo>
              <NavButtons $w={65}>
                <IconButton aria-label="Next artboard"><svg width="9" height="14"><path d="M0 0V14L9 7z" fill="#757575" /></svg></IconButton>
                <IconButton aria-label="Last artboard"><svg width="13" height="14"><path d="M10 0H13V14H10zM0 0V14L9 7z" fill="#757575" /></svg></IconButton>
              </NavButtons>
              <StatusText>Type</StatusText>
              <IconButton $w={20} aria-label="Status options"><svg width="9" height="13"><path d="M0 0V13L9 6.500z" fill="#ddd" /></svg></IconButton>
              <ScrollH><Chevron dir="left" w={14} color="#999" /><Thumb $h /><Chevron dir="right" w={14} color="#999" /></ScrollH>
            </StatusBar>
          </DocBody>
        </DocWindow>

        <RightSide>
          <Strip $inset={37}><Collapse /><Collapse right /></Strip>
          <RightBody>
            <Dock>
              {dock.map((g, i) => (
                <DockGroup key={i}>
                  <Grip $gap={5} />
                  {g.map(([name, icon]) => (
                    <DockButton key={name} aria-label={name}>{icon ? <S s={29}>{icon}</S> : <BsSuitClubFill size={26} color={c.icon} />}</DockButton>
                  ))}
                </DockGroup>
              ))}
            </Dock>
            <LibPanel>
              <LibTabs><LibTab>Libraries</LibTab>
                <IconButton aria-label="Panel menu"><svg width="15" height="11"><path d="M0 1H15M0 4H15M0 7H15M0 10H15" stroke="#bbb" strokeWidth="1.500" /></svg></IconButton>
              </LibTabs>
              <LibHead>
                <LibRow>
                  <SelectWrap><select aria-label="Library" defaultValue="My Library"><option>My Library</option></select><Chevron w={13} color="#bbb" sw={1.5} /></SelectWrap>
                  <ViewButton $on aria-label="Grid view"><svg width="18" height="17" fill="#d8d8d8"><path d="M0 0h8v8H0zM10 0h8v8h-8zM0 9.500h8v7.500H0zM10 9.500h8v7.500h-8z" /></svg></ViewButton>
                  <ViewButton aria-label="List view"><svg width="18" height="17" fill="#d8d8d8"><path d="M0 0h18v3H0zM0 4.500h18v3.500H0zM0 9.500h18v3H0zM0 14h18v3H0z" /></svg></ViewButton>
                </LibRow>
                <LibSearch>
                  <svg width="16" height="16" viewBox="0 0 16 16"><circle cx="10" cy="6" r="5" fill="none" stroke="#ddd" strokeWidth="2" /><path d="M6.500 10L1 15" stroke="#ddd" strokeWidth="3" /></svg>
                  <input type="search" placeholder="Search Adobe Stock" aria-label="Search library" /><Chevron w={13} color="#bbb" sw={1.5} />
                </LibSearch>
              </LibHead>
              <LibBody>
                <SectionTitle><svg width="12" height="10"><path d="M0 0H12L6 10z" fill="#ccc" /></svg>Graphics</SectionTitle>
                <Asset />
              </LibBody>
              <LibFoot>
                <IconButton aria-label="Add content"><svg width="21" height="22"><path d="M9 1V18M.5 9.500H17.500" stroke="#ddd" strokeWidth="3.500" /><path d="M15 19H20L17.500 22z" fill="#ddd" /></svg></IconButton>
                <Push />
                <IconButton aria-label="Creative Cloud"><svg width="25" height="18" viewBox="0 0 25 18" fill="none"><g stroke="#d6d6d6" strokeWidth="2.200"><path d="M16 1.200A7.700 7.700 0 1 1 16 16.700H7A5.500 5.500 0 0 1 7 5.700C9 3 11.500 1.200 16 1.200z" /><path d="M12.800 12.200L9.500 9.200A2.600 2.600 0 1 0 7.500 13H9" /><path d="M9.500 8L14.500 12.500A4 4 0 1 0 12.800 6.500" /></g></svg></IconButton>
                <IconButton aria-label="Delete"><svg width="17" height="20" viewBox="0 0 17 20"><path d="M0 3.500H17M5 3V1H12V3" fill="none" stroke="#8f8f8f" strokeWidth="1.800" /><path d="M1.500 6H15.500L14.500 20H2.500z" fill="#8f8f8f" /><path d="M5 8V18M8.500 8V18M12 8V18" stroke="#555" strokeWidth="1.200" /></svg></IconButton>
              </LibFoot>
            </LibPanel>
          </RightBody>
        </RightSide>
      </Main>

      <Taskbar>
        <MapArt width="900" height="50" viewBox="0 0 900 50" aria-hidden="true">
          <defs><linearGradient id="land"><stop offset="0" stopColor="#2c2922" /><stop offset="0.700" stopColor="#363228" /><stop offset="1" stopColor="#332b25" /></linearGradient></defs>
          <g fill="url(#land)">
            <path d="M26 8L33 4L30 18L34 28L30 34L26 24zM36 50L44 34L52 30L60 22L70 26L74 34L80 32L78 50z" />
            <path d="M80 0H190V18L186 34L176 46L172 36L160 28L152 14L132 8L112 10L100 16L94 18z" />
            <path d="M280 50L300 30L340 26L372 8L392 0H900V50H690L700 40L720 22L742 8L738 0H706L700 10L676 30L640 40L590 50H524L530 32L545 20L560 10L548 4L515 4L480 24L455 40L440 50z" />
          </g>
          <g fill="#1a1a1a"><path d="M524 50L526 30L545 12L565 4L590 14L596 30L610 40L600 50zM640 30L660 10L700 0L718 4L704 34L660 42L620 46z" /><path d="M790 50L800 30L830 14L845 20L836 40L826 50z" opacity="0.700" /></g>
          <g stroke="#333" fill="none"><path d="M212 30q6-8 12 0t12-4t12 4t12-4M100 40q6-6 12 0t10-4t10 3" /></g>
        </MapArt>
        <Task aria-label="Start"><svg width="20" height="20" viewBox="0 0 20 20" fill="#fff"><path d="M0 3L8.500 1.800V9.500H0zM9.500 1.600L20 0V9.500H9.500zM0 10.500H8.500V18.200L0 17zM9.500 10.500H20V20L9.500 18.400z" /></svg></Task>
        <Task aria-label="Cortana"><svg width="20" height="20"><circle cx="10" cy="10" r="8.300" fill="none" stroke="#fff" strokeWidth="2.600" /></svg></Task>
        <Task aria-label="Task view"><svg width="25" height="20" fill="none" stroke="#fff" strokeWidth="1.400"><rect x="5" y="1" width="15" height="18" /><path d="M3 3.500H1V16.500H3M22 3.500H24V16.500H22" /></svg></Task>
        <Task $w={66} aria-label="File Explorer"><svg width="28" height="24" viewBox="0 0 28 24"><path d="M0 1H10L13 4H28V23H0z" fill="#f7d672" /><path d="M0 7H28V23H0z" fill="#fce79c" /><path d="M5 24V14H23V24H18V18H10V24z" fill="#36a9dc" /><path d="M2 1H8V3H2z" fill="#fff" /></svg></Task>
        <Task $w={60} $run aria-label="Chrome"><svg width="28" height="28" viewBox="0 0 28 28"><circle cx="14" cy="14" r="13.500" fill="#fbc116" /><path d="M14 14L2.300 7.200A13.500 13.500 0 0 1 25.700 7.200H14z" fill="#de4b3c" /><path d="M14 14L2.300 7.200A13.500 13.500 0 0 0 13 27.500L19 17z" fill="#1da05a" /><circle cx="14" cy="14" r="6.600" fill="#fff" /><circle cx="14" cy="14" r="5.200" fill="#4285f4" /></svg></Task>
        <Task $w={63} aria-label="Play Music"><svg width="26" height="28" viewBox="0 0 26 28"><path d="M1 0L25 14L1 28z" fill="#ee5a1c" /><path d="M14 5L25 14L14 23z" fill="#f7a21b" /><circle cx="12" cy="14" r="8.500" fill="#fcc21b" /><circle cx="12" cy="14" r="5.500" fill="#f26b1d" /><path d="M12.500 10V16M12.500 10.500L14.500 11.500" stroke="#fff" strokeWidth="1.300" /><circle cx="11.500" cy="16" r="1.500" fill="#fff" /></svg></Task>
        <Task $w={61} $active aria-label="Illustrator"><AiTile>Ai</AiTile></Task>
        <Push />
        <Tray>
          <svg width="16" height="10" viewBox="0 0 16 10"><path d="M1 9L8 2L15 9" fill="none" stroke="#fff" strokeWidth="1.600" /></svg>
          <svg width="20" height="12" viewBox="0 0 20 12"><rect x=".7" y=".7" width="16.600" height="10.600" fill="none" stroke="#fff" strokeWidth="1.300" /><path d="M2.500 2.500h4v7h-4zM18 4h1.500v4H18z" fill="#fff" /></svg>
          <svg width="16" height="16" viewBox="0 0 16 16" fill="none" stroke="#bbb" strokeWidth="1.400"><path d="M1 15A14 14 0 0 1 15 1M5 15A10 10 0 0 1 15 5M9 15A6 6 0 0 1 15 9" /><circle cx="13.500" cy="13.500" r="1.500" fill="#fff" stroke="none" /></svg>
          <svg width="19" height="14" viewBox="0 0 19 14" fill="none" stroke="#fff" strokeWidth="1.300"><path d="M1 4.500H3.500L7 1V13L3.500 9.500H1zM11 4L18 11M18 4L11 11" /></svg>
          <Clock>8:13 PM<br />4/20/2017</Clock>
          <Notice aria-label="Notifications"><svg width="20" height="20" viewBox="0 0 20 20"><path d="M0 0H20V15H11V20L6 15H0z" fill="#fff" /><path d="M3.500 4.500H16.500M3.500 8H16.500M3.500 11.500H11" stroke="#222" strokeWidth="1.300" /></svg><Badge>1</Badge></Notice>
        </Tray>
      </Taskbar>
    </Screen>
  );
}
